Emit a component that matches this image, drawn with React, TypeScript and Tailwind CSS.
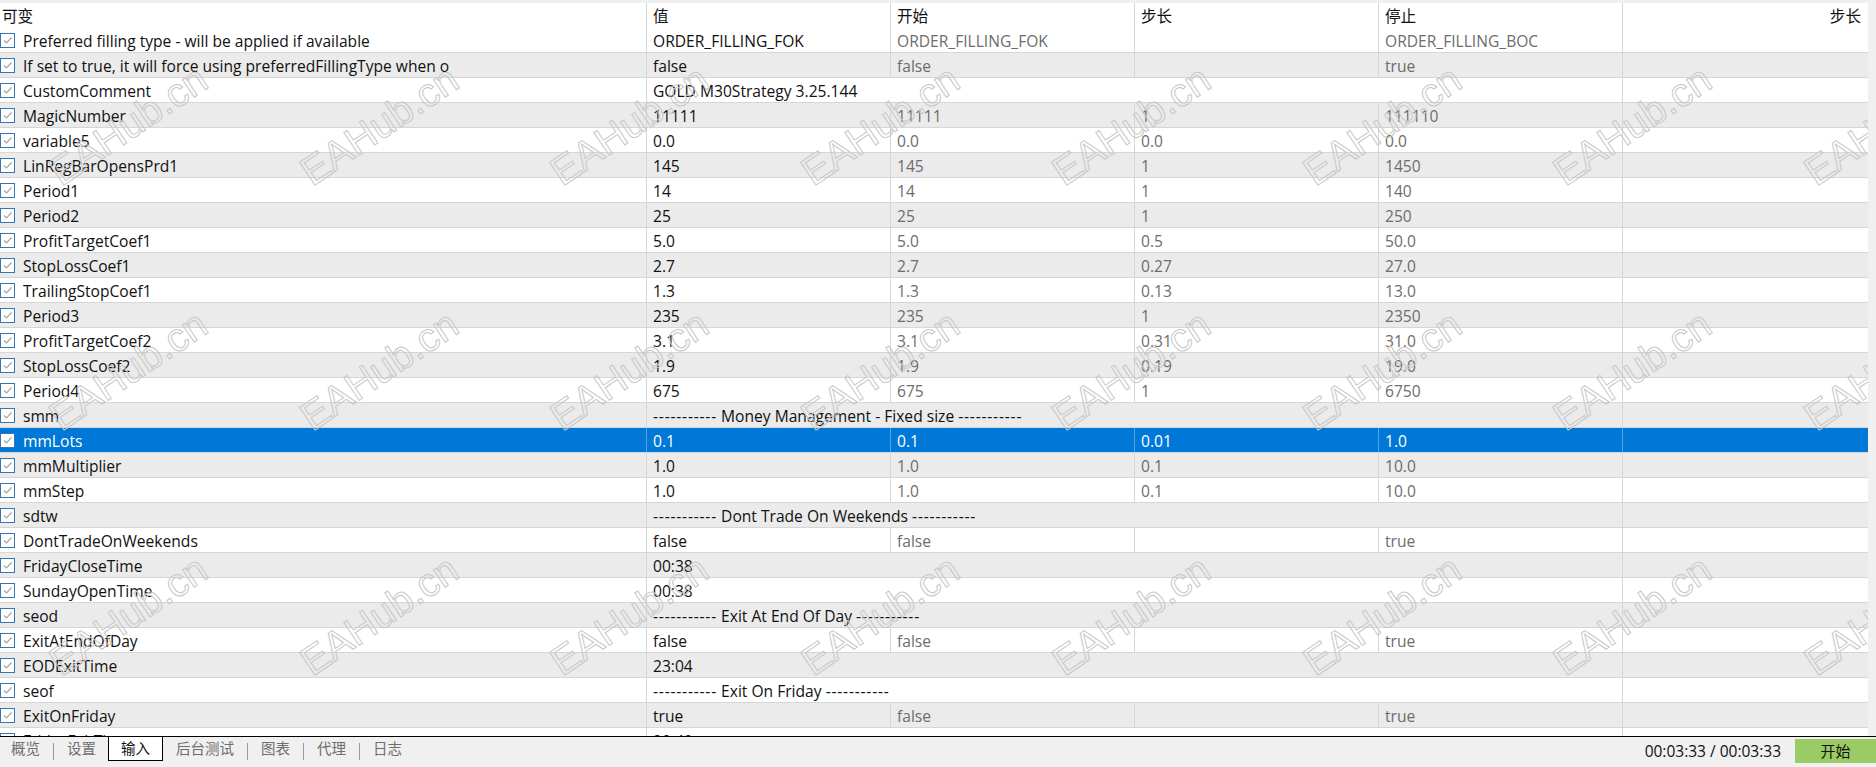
import React from "react";

type Row = {
  name: string;
  v: string;
  start?: string;
  step?: string;
  stop?: string;
  span?: boolean;
  sep?: boolean;
  sel?: boolean;
};

const ROWS: Row[] = [
  { name: "Preferred filling type - will be applied if available", v: "ORDER_FILLING_FOK", start: "ORDER_FILLING_FOK", step: "", stop: "ORDER_FILLING_BOC" },
  { name: "If set to true, it will force using preferredFillingType when o", v: "false", start: "false", step: "", stop: "true" },
  { name: "CustomComment", v: "GOLD M30Strategy 3.25.144", span: true },
  { name: "MagicNumber", v: "11111", start: "11111", step: "1", stop: "111110" },
  { name: "variable5", v: "0.0", start: "0.0", step: "0.0", stop: "0.0" },
  { name: "LinRegBarOpensPrd1", v: "145", start: "145", step: "1", stop: "1450" },
  { name: "Period1", v: "14", start: "14", step: "1", stop: "140" },
  { name: "Period2", v: "25", start: "25", step: "1", stop: "250" },
  { name: "ProfitTargetCoef1", v: "5.0", start: "5.0", step: "0.5", stop: "50.0" },
  { name: "StopLossCoef1", v: "2.7", start: "2.7", step: "0.27", stop: "27.0" },
  { name: "TrailingStopCoef1", v: "1.3", start: "1.3", step: "0.13", stop: "13.0" },
  { name: "Period3", v: "235", start: "235", step: "1", stop: "2350" },
  { name: "ProfitTargetCoef2", v: "3.1", start: "3.1", step: "0.31", stop: "31.0" },
  { name: "StopLossCoef2", v: "1.9", start: "1.9", step: "0.19", stop: "19.0" },
  { name: "Period4", v: "675", start: "675", step: "1", stop: "6750" },
  { name: "smm", v: "Money Management - Fixed size", span: true, sep: true },
  { name: "mmLots", v: "0.1", start: "0.1", step: "0.01", stop: "1.0", sel: true },
  { name: "mmMultiplier", v: "1.0", start: "1.0", step: "0.1", stop: "10.0" },
  { name: "mmStep", v: "1.0", start: "1.0", step: "0.1", stop: "10.0" },
  { name: "sdtw", v: "Dont Trade On Weekends", span: true, sep: true },
  { name: "DontTradeOnWeekends", v: "false", start: "false", step: "", stop: "true" },
  { name: "FridayCloseTime", v: "00:38", span: true },
  { name: "SundayOpenTime", v: "00:38", span: true },
  { name: "seod", v: "Exit At End Of Day", span: true, sep: true },
  { name: "ExitAtEndOfDay", v: "false", start: "false", step: "", stop: "true" },
  { name: "EODExitTime", v: "23:04", span: true },
  { name: "seof", v: "Exit On Friday", span: true, sep: true },
  { name: "ExitOnFriday", v: "true", start: "false", step: "", stop: "true" },
  { name: "FridayExitTime", v: "20:40", span: true },
];

const DASHES = "-----------";

function Check() {
  return (
    <div className="flex h-[15px] w-[15px] shrink-0 items-center justify-center border border-[#3a74b0] bg-white">
      <svg width="11" height="11" viewBox="0 0 11 11">
        <polyline points="2,5.5 4.5,8 9.5,2.5" fill="none" stroke="#a6a6a6" strokeWidth="1.2" />
      </svg>
    </div>
  );
}

function TableRow({ row, idx }: { row: Row; idx: number }) {
  const bg = row.sel ? "bg-[#0078d7] text-white" : idx % 2 === 0 ? "bg-white" : "bg-[#ebebeb]";
  const line = row.sel ? "border-[#5b9fdf]" : "border-[#d6d6d6]";
  const dim = row.sel ? "text-white" : "text-[#6d6d6d]";
  return (
    <div className={`flex h-[25px] shrink-0 border-b border-[#d6d6d6] pt-[2px] leading-[22px] ${bg}`}>
      <div className="-mt-[2px] flex w-[646px] shrink-0 items-center overflow-hidden whitespace-nowrap">
        <Check />
        <span className={`mt-[2px] ml-[8px] ${row.sel ? "text-white" : "text-[#111]"}`}>{row.name}</span>
      </div>
      {row.span ? (
        <div className={`-mt-[2px] w-[976px] shrink-0 border-l pt-[2px] pl-[6px] whitespace-nowrap ${line}`}>
          {row.sep ? (
            <>
              <span className="tracking-[0.8px]">{DASHES}</span> {row.v}{" "}
              <span className="tracking-[0.8px]">{DASHES}</span>
            </>
          ) : (
            row.v
          )}
        </div>
      ) : (
        <>
          <div className={`-mt-[2px] w-[244px] shrink-0 border-l pt-[2px] pl-[6px] whitespace-nowrap ${line}`}>{row.v}</div>
          <div className={`-mt-[2px] w-[244px] shrink-0 border-l pt-[2px] pl-[6px] whitespace-nowrap ${line} ${dim}`}>{row.start}</div>
          <div className={`-mt-[2px] w-[244px] shrink-0 border-l pt-[2px] pl-[6px] whitespace-nowrap ${line} ${dim}`}>{row.step}</div>
          <div className={`-mt-[2px] w-[244px] shrink-0 border-l pt-[2px] pl-[6px] whitespace-nowrap ${line} ${dim}`}>{row.stop}</div>
        </>
      )}
      <div className={`-mt-[2px] flex-1 border-l ${line}`} />
    </div>
  );
}

function Watermarks() {
  const marks: { x: number; y: number }[] = [];
  for (let j = 0; j < 3; j++) {
    for (let i = 0; i < 8; i++) {
      marks.push({ x: 128 + 250.7 * i, y: 122 + 245 * j });
    }
  }
  return (
    <div className="pointer-events-none absolute inset-0 overflow-hidden">
      {marks.map((m, k) => (
        <span
          key={k}
          className="absolute -translate-x-1/2 -translate-y-1/2 -rotate-[34deg] font-['Liberation_Sans',Arial,sans-serif] text-[40px] leading-none whitespace-nowrap text-transparent [-webkit-text-stroke:1px_#c8c8c8]"
          style={{ left: m.x, top: m.y }}
        >
          EAHub.cn
        </span>
      ))}
    </div>
  );
}

const TABS = ["概览", "设置", "输入", "后台测试", "图表", "代理", "日志"];

export default function App() {
  return (
    <div className="flex h-[767px] w-[1876px] flex-col overflow-hidden bg-[#f0f0f0] font-['Open_Sans','Noto_Sans_CJK_SC',sans-serif] text-[15.6px] text-[#111]">
      <div className="flex h-[736px] shrink-0 pt-[3px]">
        <div className="relative flex w-[1868px] shrink-0 flex-col overflow-hidden bg-white">
          {/* Header */}
          <div className="flex h-[25px] shrink-0 bg-white pt-[2px] leading-[22px]">
            <div className="w-[646px] shrink-0 pl-[2px]">可变</div>
            <div className="-mt-[2px] w-[244px] shrink-0 border-l border-[#d6d6d6] pt-[2px] pl-[6px]">值</div>
            <div className="-mt-[2px] w-[244px] shrink-0 border-l border-[#d6d6d6] pt-[2px] pl-[6px]">开始</div>
            <div className="-mt-[2px] w-[244px] shrink-0 border-l border-[#d6d6d6] pt-[2px] pl-[6px]">步长</div>
            <div className="-mt-[2px] w-[244px] shrink-0 border-l border-[#d6d6d6] pt-[2px] pl-[6px]">停止</div>
            <div className="-mt-[2px] flex-1 border-l border-[#d6d6d6] pt-[2px] pr-[7px] text-right">步长</div>
          </div>
          {ROWS.map((r, i) => (
            <TableRow key={r.name} row={r} idx={i} />
          ))}
          <Watermarks />
        </div>
        <div className="flex-1 bg-[#f0f0f0]" />
      </div>

      {/* Bottom tabs */}
      <div className="flex h-[31px] shrink-0 items-start border-t border-black bg-[#f0f0f0] text-[14.5px] leading-[24px]">
        <div className="flex items-start pl-[11px] text-[#6e6e6e]">
          <span>{TABS[0]}</span>
          <span className="mx-[13px] mt-[6px] h-[17px] w-px bg-[#9a9a9a]" />
          <span>{TABS[1]}</span>
          <span className="ml-[12px] h-[24px] border-x border-b border-black bg-white px-[12px] text-[#111]">{TABS[2]}</span>
          <span className="ml-[13px]">{TABS[3]}</span>
          <span className="mx-[13px] mt-[6px] h-[17px] w-px bg-[#9a9a9a]" />
          <span>{TABS[4]}</span>
          <span className="mx-[13px] mt-[6px] h-[17px] w-px bg-[#9a9a9a]" />
          <span>{TABS[5]}</span>
          <span className="mx-[13px] mt-[6px] h-[17px] w-px bg-[#9a9a9a]" />
          <span>{TABS[6]}</span>
        </div>
        <div className="ml-auto flex items-center pt-[2px]">
          <span className="text-[15.5px] text-[#111]">00:03:33 / 00:03:33</span>
          <button className="ml-[14px] h-[24px] w-[81px] bg-[#9bcb64] text-[15px] text-[#111]">开始</button>
        </div>
      </div>
    </div>
  );
}
